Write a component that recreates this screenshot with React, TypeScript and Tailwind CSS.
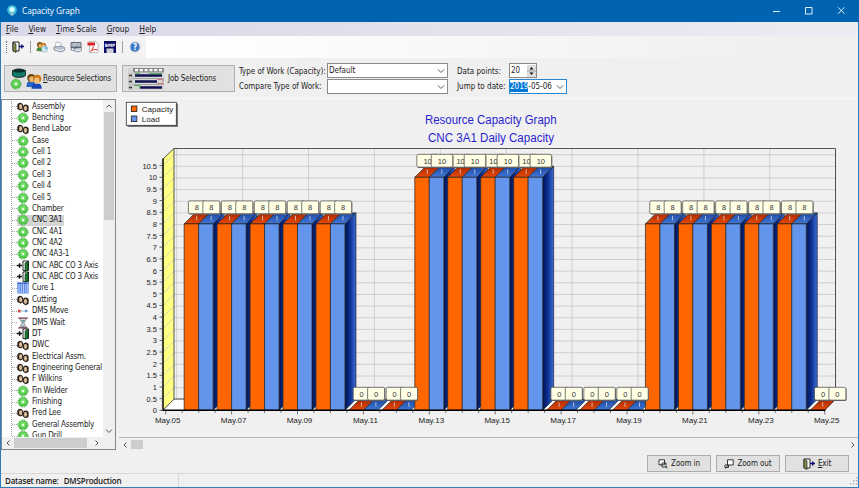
import type { ReactNode } from "react";

type IconProps = { className?: string };

const treeItems: { label: string; icon: string }[] = [
  { label: "Assembly", icon: "people" },
  { label: "Benching", icon: "gear" },
  { label: "Bend Labor", icon: "people" },
  { label: "Case", icon: "gear" },
  { label: "Cell 1", icon: "gear" },
  { label: "Cell 2", icon: "gear" },
  { label: "Cell 3", icon: "gear" },
  { label: "Cell 4", icon: "gear" },
  { label: "Cell 5", icon: "gear" },
  { label: "Chamber", icon: "gear" },
  { label: "CNC 3A1", icon: "gear" },
  { label: "CNC 4A1", icon: "gear" },
  { label: "CNC 4A2", icon: "gear" },
  { label: "CNC 4A3-1", icon: "gear" },
  { label: "CNC ABC CO 3 Axis", icon: "door" },
  { label: "CNC ABC CO 3 Axis", icon: "door" },
  { label: "Cure 1", icon: "grid" },
  { label: "Cutting", icon: "people" },
  { label: "DMS Move", icon: "move" },
  { label: "DMS Wait", icon: "wait" },
  { label: "DT", icon: "door" },
  { label: "DWC", icon: "people" },
  { label: "Electrical Assm.", icon: "people" },
  { label: "Engineering General", icon: "people" },
  { label: "F Wilkins", icon: "people" },
  { label: "Fin Welder", icon: "gear" },
  { label: "Finishing", icon: "gear" },
  { label: "Fred Lee", icon: "people" },
  { label: "General Assembly", icon: "gear" },
  { label: "Gun Drill", icon: "gear" },
];

const values = [8, 8, 8, 8, 8, 0, 0, 10, 10, 10, 10, 0, 0, 0, 8, 8, 8, 8, 8, 0];

function TreeIcon({ name }: { name: string }) {
  return (
    <svg viewBox="0 0 12 12" className="size-3 shrink-0">
      {name === "gear" && (
        <>
          <circle cx="6" cy="6" r="4.600" fill="#4cc444" />
          <circle cx="6" cy="6" r="5" fill="none" stroke="#3fae3a" strokeWidth="1" strokeDasharray="1.800 0.800" />
          <circle cx="6" cy="5.400" r="3" fill="#78dc6c" />
          <circle cx="6" cy="6" r="1.200" fill="#e9ffe6" />
        </>
      )}
      {name === "people" && (
        <>
          <path d="M.3 8V4.200C.3 .8 5.800.8 6 4.200L5.800 8.500 3.500 9.500Z" fill="#2a2018" />
          <ellipse cx="3.600" cy="5.600" rx="1.600" ry="2.600" fill="#d8bd98" />
          <path d="M6 9.500V5.500C6.300 2.600 11.700 2.600 11.700 6L11.500 10 8.500 11.300Z" fill="#2a2018" />
          <ellipse cx="8.500" cy="7.300" rx="1.600" ry="2.600" fill="#d8bd98" />
        </>
      )}
      {name === "door" && (
        <>
          <path d="M6 1h5.500v9.500H6z" fill="#fff" stroke="#111" strokeWidth="0.900" />
          <path d="M8 3 11 1.300V10L8 11.700Z" fill="#1f7a35" stroke="#0a3014" strokeWidth="0.600" />
          <path d="M0 5.500h5M2.600 3.300v4.400" stroke="#111" strokeWidth="1.500" />
        </>
      )}
      {name === "grid" && (
        <>
          <path d="M.3.500h11.400v11H.3z" fill="#5d8ae6" />
          <path d="M2 1v10M4.300 1v10M6.500 1v10M8.700 1v10M10.700 1v10" stroke="#dce8ff" strokeWidth="0.700" />
          <path d="M.3 1.200h11.400" stroke="#2a56b8" />
        </>
      )}
      {name === "move" && (
        <>
          <path d="M1 4.800h2.600v2.600H1z" fill="#d0402e" />
          <path d="M4 6h7" stroke="#7ab" strokeWidth="0.800" />
          <path d="M8 4.200 11 6 8 7.800Z" fill="#5b8fd0" />
        </>
      )}
      {name === "wait" && (
        <>
          <path d="M2.500 1.500h7L6.600 6l2.900 4.500h-7L5.400 6Z" fill="#d9e4ea" stroke="#555" strokeWidth="0.700" />
          <path d="M1 1h10M1 11h10" stroke="#8a3340" strokeWidth="1.200" />
          <path d="M4 3h4L6 5.500ZM4 10l2-2 2 2Z" fill="#6a97a5" />
        </>
      )}
    </svg>
  );
}

function ExitIcon({ className }: IconProps) {
  return (
    <svg viewBox="0 0 12 12" className={className}>
      <path d="M1 1h6v9H1z" fill="#fff" stroke="#222" />
      <path d="M1 1l3 2v8.500L1 10Z" fill="#8b8b50" stroke="#222" strokeWidth="0.700" />
      <path d="M7 5.500h5M9.700 3.500v4" stroke="#0c0c70" strokeWidth="1.400" />
    </svg>
  );
}

function UsersIcon({ className }: IconProps) {
  return (
    <svg viewBox="0 0 16 16" className={className}>
      <path d="M.5 14C.5 9 2 8 5 8s4.500 1 4.500 6Z" fill="#2a66c8" />
      <circle cx="5.300" cy="5" r="4" fill="#6b4a10" />
      <ellipse cx="5.800" cy="6.300" rx="2.600" ry="3" fill="#efb26d" />
      <path d="M5.500 15.800C5.500 11.500 8 10.500 11 10.500s4.700 1 4.700 5.300Z" fill="#1648b8" />
      <circle cx="11.200" cy="5.800" r="4.100" fill="#c87a14" />
      <ellipse cx="10.800" cy="7.600" rx="2.600" ry="3.100" fill="#f7c07a" />
    </svg>
  );
}

function GroupChartIcon() {
  return (
    <svg viewBox="0 0 12 12" className="size-3">
      <path d="M.5 10C.5 7 2 6 4 6s3 1 3 4.500Z" fill="#3c8a3a" />
      <circle cx="3.800" cy="3.800" r="2.800" fill="#7a5212" />
      <ellipse cx="4.200" cy="4.700" rx="1.700" ry="2" fill="#efb26d" />
      <circle cx="7.500" cy="4.300" r="2.600" fill="#c07a1a" />
      <ellipse cx="7.300" cy="5.400" rx="1.600" ry="1.900" fill="#f7c07a" />
      <circle cx="8.700" cy="8.200" r="3.100" fill="#d3e8f2" stroke="#9ab4c0" strokeWidth="0.600" />
      <path d="M8.700 8.200V5.100a3.100 3.100 0 0 1 3.100 3.100Z" fill="#7cc0e0" />
    </svg>
  );
}

function PrinterIcon({ preview }: { preview?: boolean }) {
  return (
    <svg viewBox="0 0 12 12" className="size-3">
      <path d="M3 1l5 1v5L2.500 6Z" fill="#fff" stroke="#8d96a5" strokeWidth="0.600" />
      <path d="M1 6l7-1 3.500 1.500v3L8 11 1 9Z" fill="#b8bfd0" stroke="#687086" strokeWidth="0.600" />
      <path d="M2 8.200 8 9.500l3-1.300" stroke="#fff" strokeWidth="0.900" fill="none" />
      {preview && (
        <path d="M1 1.500h10v5H1zM4 9l3-4" fill="#8fa0b0" fillOpacity="0.600" stroke="#4a5664" strokeWidth="0.800" />
      )}
    </svg>
  );
}

function Chevron({ className, d }: { className?: string; d: string }) {
  return (
    <svg viewBox="0 0 8 8" className={className} fill="none" stroke="#555" strokeWidth="1">
      <path d={d} />
    </svg>
  );
}

const LEFT = "M5.500 1.500 3 4l2.500 2.500";
const RIGHT = "M2.500 1.500 5 4 2.500 6.500";
const UP = "M1.500 5.500 4 3l2.500 2.500";
const DOWN = "M1 2.500l3 3 3-3";

function TitleBar() {
  return (
    <header className="flex h-[22px] shrink-0 items-center bg-[#0063b1] text-white">
      <svg viewBox="0 0 12 12" className="ml-[6px] size-3">
        <circle cx="6" cy="5" r="4.800" fill="#3fc0d8" />
        <circle cx="6" cy="4.500" r="2.600" fill="#d8ffff" />
        <path d="M4.500 8h3v2.500h-3z" fill="#a9cbd0" />
      </svg>
      <span className="ml-[4px] font-['Open_Sans',sans-serif] text-[8.3px] tracking-[-0.1px]">Capacity Graph</span>
      <svg viewBox="0 0 80 12" className="mr-[10px] ml-auto h-3 w-20" fill="none" stroke="#fff" strokeWidth="0.900">
        <path d="M4 6.500h7M36.500 2.500h6.500v6.500h-6.500zM69 2.300l6.500 6.500M75.500 2.300 69 8.800" />
      </svg>
    </header>
  );
}

function MenuBar() {
  const items = ["File", "View", "Time Scale", "Group", "Help"];
  return (
    <nav className="flex h-[14px] shrink-0 items-center gap-[10px] bg-linear-to-r from-[#d8d8e8] to-[#ececf2] pl-[5px] text-[8.4px] tracking-[-0.05px]">
      {items.map((item) => (
        <span key={item}>
          <u>{item[0]}</u>
          {item.slice(1)}
        </span>
      ))}
    </nav>
  );
}

function Toolbar() {
  return (
    <div className="flex h-[22px] shrink-0 items-center bg-linear-to-r from-white from-20% to-[#f0f0f0] to-90%">
      <div className="flex h-full w-[145px] items-center bg-[#f3f3f3] pl-[5px]">
        <div className="mr-[5px] h-3 border-l border-dotted border-gray-500" />
        <ExitIcon className="size-3" />
        <div className="ml-[6px] h-3 border-l border-gray-400" />
        <div className="ml-[5px] flex items-center gap-[5px]">
          <GroupChartIcon />
          <PrinterIcon />
          <PrinterIcon preview />
          <svg viewBox="0 0 12 12" className="size-3">
            <path d="M2.500.5h6l2.500 2.500v8.500h-8.500z" fill="#fff" stroke="#999" strokeWidth="0.600" />
            <path d="M.5 1.500h7.500v3H.5z" fill="#d22" />
            <path d="M3.500 10.500C6 8 6.500 6 6 5.300M3.500 10.500C5 8.500 8 8 10.500 9" fill="none" stroke="#d22" />
          </svg>
          <svg viewBox="0 0 12 12" className="size-3">
            <path d="M0 0h12v12H0z" fill="#0a0a66" />
            <path d="M2.500 7.500h7V12h-7z" fill="#d0d0d8" />
            <text x="6" y="6" textAnchor="middle" fontSize="4.600" fontWeight="bold" fill="#fff">
              BMP
            </text>
          </svg>
        </div>
        <div className="ml-[6px] h-3 border-l border-gray-400" />
        <svg viewBox="0 0 12 12" className="ml-[6px] size-3">
          <circle cx="6" cy="6" r="5" fill="#3c78c8" stroke="#b8c8dc" />
          <text x="6" y="8.800" textAnchor="middle" fontSize="8" fontWeight="bold" fill="#fff">
            ?
          </text>
        </svg>
      </div>
    </div>
  );
}

function ComboBox({ value }: { value: string }) {
  return (
    <div className="flex h-[15px] w-[121px] items-center justify-between border border-[#8a8a8a] bg-white pr-[2px] pl-[1px]">
      <span>{value}</span>
      <Chevron className="size-2" d={DOWN} />
    </div>
  );
}

function OptionsBar() {
  return (
    <section className="flex h-[40px] shrink-0 pl-[3px]">
      <button className="mt-[7px] flex h-[27px] w-[113px] items-center border border-[#b0b0b0] bg-[#e1e1e1] pl-[5px]">
        <div className="flex w-[16px] flex-col items-start">
          <svg viewBox="0 0 14 10" className="ml-[2px] h-[10px] w-[14px]">
            <path d="M.5 2.500v5c2 2.500 11 2.500 13 0v-5Z" fill="#127a6a" stroke="#111" strokeWidth="0.800" />
            <ellipse cx="7" cy="2.600" rx="6.400" ry="2" fill="#0c2f2a" />
          </svg>
          <TreeIcon name="gear" />
        </div>
        <UsersIcon className="mt-[4px] size-4" />
        <span className="ml-px pt-px tracking-[-0.22px]">
          <u>R</u>esource Selections
        </span>
      </button>
      <button className="mt-[7px] ml-[5px] flex h-[27px] w-[113px] items-center border border-[#b0b0b0] bg-[#e1e1e1] pl-[5px]">
        <svg viewBox="0 0 36 24" className="h-6 w-9">
          <path d="M0 1h36v22H0z" fill="#d5d5d5" />
          <path d="M5 1h31v4.500H5z" fill="#8a8a8a" />
          <path d="M7 3.200h27" stroke="#fff" strokeWidth="2.200" strokeDasharray="3 1.800" />
          <path d="M0 6h5v17H0z" fill="#c8c8c8" />
          <path d="M1 8.500h3M1 14.500h3M1 20.500h3" stroke="#333" strokeWidth="1.500" />
          <path d="M5 11.500h31M5 17.500h31" stroke="#888" strokeWidth="0.600" />
          <path d="M7 8.500h27M7 14.500h22M12 20.500h22" stroke="#101050" strokeWidth="2.300" />
          <path d="M7 6.700h5M21 6.700h13M6 18.700h6v3" fill="none" stroke="#2c9a42" strokeWidth="0.900" />
          <path d="M29 12.500h6v4h-6" stroke="#c66" strokeWidth="0.800" fill="none" />
        </svg>
        <span className="ml-[4px] pt-px tracking-[-0.15px]">
          <u>J</u>ob Selections
        </span>
      </button>
      <div className="mt-[6px] ml-[4px] grid h-[31px] w-[88px] grid-rows-2 items-center tracking-[-0.05px]">
        <span>Type of Work (Capacity):</span>
        <span>Compare Type of Work:</span>
      </div>
      <div className="mt-[5px] flex flex-col gap-px">
        <ComboBox value="Default" />
        <ComboBox value="" />
      </div>
      <div className="mt-[6px] ml-[9px] grid h-[31px] w-[52px] grid-rows-2 items-center">
        <span>Data points:</span>
        <span>Jump to date:</span>
      </div>
      <div className="mt-[5px] flex flex-col gap-px">
        <div className="flex h-[15px] w-[28px] items-center justify-between border border-[#8a8a8a] bg-white pl-[1px]">
          <span>20</span>
          <svg viewBox="0 0 9 12" className="h-3 w-[9px]">
            <path d="M0 0h9v12H0z" fill="#ddd" />
            <path d="M0 6h9" stroke="#888" strokeWidth="0.700" />
            <path d="M2.500 4.500h4L4.500 2ZM2.500 7.500h4L4.500 10Z" fill="#111" />
          </svg>
        </div>
        <div className="flex h-[15px] w-[58px] items-center border border-[#2a86cf] bg-white">
          <span className="bg-[#0078d7] py-px text-white">2019</span>
          <span>-05-06</span>
          <Chevron className="mr-[2px] ml-auto size-2" d={DOWN} />
        </div>
      </div>
    </section>
  );
}

function ResourceTree() {
  return (
    <aside className="flex h-[351px] w-[115px] shrink-0 flex-col border border-[#828790] bg-white">
      <div className="flex min-h-0 flex-1">
        <div className="min-w-0 flex-1 overflow-hidden pt-px pl-[9px]">
          <ul className="border-l border-dotted border-gray-400 tracking-[-0.2px]">
            {treeItems.map((item, i) => (
              <li key={i} className="flex h-[11.36px] items-center whitespace-nowrap">
                <span className="w-[5px] shrink-0 border-t border-dotted border-gray-400" />
                <span className={item.label === "CNC 3A1" ? "flex h-full items-center bg-[#d5d5d5] pr-[2px]" : "flex items-center"}>
                  <TreeIcon name={item.icon} />
                  <span className="ml-[3px]">{item.label}</span>
                </span>
              </li>
            ))}
          </ul>
        </div>
        <div className="flex w-[12px] shrink-0 flex-col items-center bg-[#f0f0f0]">
          <Chevron className="my-[2px] size-2" d={UP} />
          <div className="h-[108px] w-[10px] bg-[#cdcdcd]" />
          <Chevron className="mt-auto mb-[2px] size-2" d={DOWN} />
        </div>
      </div>
      <div className="flex h-[12px] shrink-0 items-center bg-[#f0f0f0] pl-[2px]">
        <Chevron className="size-2" d={LEFT} />
        <div className="ml-[2px] h-[10px] w-[73px] bg-[#cdcdcd]" />
        <Chevron className="ml-[6px] size-2" d={RIGHT} />
      </div>
    </aside>
  );
}

// chart geometry, in page pixels
const BASE = 410.3;
const UNIT = 23.3;
const DAY = 32.95;
const ORIGIN = 165.7;
const DEPTH = 11;
const HALF = 14.5;

function Bar({ cx, value, last }: { cx: number; value: number; last: boolean }) {
  const top = BASE - value * UNIT;
  const left = cx - HALF;
  const right = cx + HALF;
  return (
    <g stroke="#222" strokeWidth="0.700">
      {value > 0 && (
        <path d={`M${right} ${top}l${DEPTH} ${-DEPTH}V${BASE - DEPTH}L${right} ${BASE}Z`} fill="url(#side)" />
      )}
      <path d={`M${left} ${top}l${DEPTH} ${-DEPTH}h${HALF}L${cx} ${top}Z`} fill="url(#orangeTop)" />
      {!last && <path d={`M${cx} ${top}l${DEPTH} ${-DEPTH}h${HALF}L${right} ${top}Z`} fill="url(#blueTop)" />}
      {value > 0 && (
        <>
          <path d={`M${left} ${top}H${cx}V${BASE}H${left}Z`} fill="#ff6600" />
          <path d={`M${cx} ${top}H${right}V${BASE}H${cx}Z`} fill="#6495ed" />
        </>
      )}
      <path d={`M${cx - 2} ${top - 8}v4.500M${cx + 12.500} ${top - 8}v4.500`} stroke="#e8e8e8" />
    </g>
  );
}

function Mark({ x, value }: { x: number; value: number }) {
  const top = BASE - value * UNIT;
  const w = value === 10 ? 21.5 : 17;
  return (
    <g>
      <rect x={x - w / 2 + 0.7} y={top - 22.3} width={w} height="13" rx="1.500" fill="#777" />
      <rect x={x - w / 2} y={top - 23} width={w} height="12.800" rx="1.500" fill="#ffffe6" stroke="#444" strokeWidth="0.700" />
      <text x={x} y={top - 13.7} textAnchor="middle" fontSize="7.500" fill="#333">
        {value}
      </text>
    </g>
  );
}

function CapacityChart() {
  const groups = values.map((value, i) => ({ value, cx: ORIGIN + DAY * (i + 1) }));
  const steps = Array.from({ length: 22 }, (_, i) => i / 2);
  const dates = Array.from({ length: 11 }, (_, i) => i);

  return (
    <svg viewBox="119 99 738 338" className="h-[338px] w-[738px] shrink-0 font-['Liberation_Sans',sans-serif]">
      <defs>
        <linearGradient id="side">
          <stop offset="0" stopColor="#001458" />
          <stop offset="0.400" stopColor="#0a2a86" />
          <stop offset="1" stopColor="#3a6cdc" />
        </linearGradient>
        <linearGradient id="orangeTop" x1="0" y1="1" x2="0" y2="0">
          <stop offset="0" stopColor="#e84a08" />
          <stop offset="1" stopColor="#a82800" />
        </linearGradient>
        <linearGradient id="blueTop" x1="0" y1="1" x2="0" y2="0">
          <stop offset="0" stopColor="#4078d8" />
          <stop offset="1" stopColor="#1c48a0" />
        </linearGradient>
      </defs>

      <g fontSize="12" fill="#2a1fd0">
        <text x="425" y="123.500" textLength="131.500" lengthAdjust="spacingAndGlyphs">Resource Capacity Graph</text>
        <text x="428" y="142" textLength="126" lengthAdjust="spacingAndGlyphs">CNC 3A1 Daily Capacity</text>
      </g>

      <rect x="127.500" y="103.500" width="50.500" height="23.500" fill="#777" />
      <rect x="126.300" y="102.300" width="50" height="23" fill="#fff" stroke="#333" strokeWidth="0.800" />
      <rect x="131.300" y="106" width="5.600" height="5.600" fill="#ff6600" stroke="#222" strokeWidth="0.800" />
      <rect x="131.300" y="116" width="5.600" height="5.600" fill="#6495ed" stroke="#222" strokeWidth="0.800" />
      <g fontSize="8" fill="#222">
        <text x="141.700" y="111.700" textLength="31.500">Capacity</text>
        <text x="141.700" y="121.800" textLength="18">Load</text>
      </g>

      <path d="M163 159 174 148.500V399L163 410.300Z" fill="#ffff80" />
      <path d="M163 410.300 174 399H835.500L825 410.300Z" fill="#fff" />
      <g stroke="#c6c6c6" strokeWidth="0.800">
        {steps.map((s) => (
          <path key={s} fill="none" d={`M163 ${BASE - s * UNIT}l11 -11H835.500`} />
        ))}
        {dates.map((d) => (
          <path key={d} d={`M${ORIGIN + DEPTH + d * DAY * 2} 148.500V399`} />
        ))}
      </g>
      <path d="M163 159 174 148.500H835.500V399H174V148.500M174 399 163 410.300" fill="none" stroke="#444" strokeWidth="0.900" />

      {groups.map((g, i) => (
        <Bar key={i} cx={g.cx} value={g.value} last={i === groups.length - 1} />
      ))}

      <path d="M163 158.500V410.300H825.500" fill="none" stroke="#000" strokeWidth="1.500" />
      {Array.from({ length: 54 }, (_, i) => (
        <path key={i} d={`M161 ${BASE - (i * UNIT) / 5}h2`} stroke="#777" strokeWidth="0.600" />
      ))}
      {Array.from({ length: 41 }, (_, i) => (
        <path key={i} d={`M${ORIGIN + (i * DAY) / 2} 411v${i % 4 === 0 ? 3.5 : 2}`} stroke="#444" strokeWidth="0.700" />
      ))}
      <g fontSize="7.500" fill="#222">
        {steps.map((s) => (
          <g key={s}>
            <path d={`M159.500 ${BASE - s * UNIT}h3`} stroke="#444" strokeWidth="0.800" />
            <text x="157" y={BASE - s * UNIT + 3} textAnchor="end">
              {s}
            </text>
          </g>
        ))}
        {dates.map((d) => (
          <text key={d} x={ORIGIN + d * DAY * 2 + 2} y="423.400" textAnchor="middle" fontSize="8">
            {`May.${String(5 + d * 2).padStart(2, "0")}`}
          </text>
        ))}
      </g>

      {groups.map((g, i) => (
        <Mark key={i} x={g.cx - 1.7} value={g.value} />
      ))}
      {groups.map((g, i) => (
        <Mark key={i} x={g.cx + 12.7} value={g.value} />
      ))}
    </svg>
  );
}

function ActionButton({ children }: { children: ReactNode }) {
  return (
    <button className="flex h-[17px] w-[64px] items-center justify-center gap-[3px] border border-[#adadad] bg-[#e1e1e1] tracking-[-0.1px]">
      {children}
    </button>
  );
}

export default function App() {
  return (
    <div className="flex h-[488px] w-[859px] flex-col overflow-hidden bg-[#f0f0f0] font-['DejaVu_Sans_Condensed','DejaVu_Sans',sans-serif] text-[8px] leading-none whitespace-nowrap text-[#1c1c1c]">
      <TitleBar />
      <div className="flex min-h-0 flex-1 flex-col border-x border-b border-[#2f7ab8]">
        <MenuBar />
        <Toolbar />
        <OptionsBar />
        <div className="flex h-[353px] shrink-0 border-t border-[#f8f8f8]">
          <ResourceTree />
          <div className="ml-[3px] flex flex-1 flex-col">
            <CapacityChart />
            <div className="flex h-[14px] items-center border-t border-[#b8b8b8]">
              <Chevron className="ml-[2px] size-2" d={LEFT} />
              <div className="ml-[2px] h-[9px] w-[12px] bg-[#cdcdcd]" />
              <Chevron className="mr-px ml-auto size-2" d={RIGHT} />
            </div>
          </div>
        </div>
        <div className="flex flex-1 justify-end gap-[5px] pt-[4px] pr-[9px]">
          <ActionButton>
            <svg viewBox="0 0 10 10" className="size-[10px]" fill="#fff" stroke="#222" strokeWidth="0.900">
              <path d="M1 .8h5.500v5H1zM4 4h4v4H4zM7.500 7.500l2 1.500" />
            </svg>
            <span className="pt-px">Zoom in</span>
          </ActionButton>
          <ActionButton>
            <svg viewBox="0 0 10 10" className="size-[10px]" fill="#fff" stroke="#222" strokeWidth="0.900">
              <path d="M3.500.8H9.200v5.200H3.500zM1 6h3.500v2.500H1zM4 6 1.500 9.500" />
            </svg>
            <span className="pt-px">Zoom out</span>
          </ActionButton>
          <ActionButton>
            <ExitIcon className="size-3" />
            <span className="pt-px">
              <u>E</u>xit
            </span>
          </ActionButton>
        </div>
        <footer className="flex h-[14px] shrink-0 items-center border-t border-[#d8d8d8] pl-[4px]">
          <div className="flex h-full w-[174px] items-center gap-[5px] border-r border-[#d8d8d8] font-['Open_Sans',sans-serif] text-[8px] font-semibold tracking-[-0.2px]">
            <span>Dataset name:</span>
            <span>DMSProduction</span>
          </div>
          <svg viewBox="0 0 8 8" className="ml-auto size-2" fill="#b5b5b5">
            <path d="M6 0h1.500v1.500H6zM6 3h1.500v1.500H6zM6 6h1.500v1.500H6zM3 3h1.500v1.500H3zM3 6h1.500v1.500H3zM0 6h1.500v1.500H0z" />
          </svg>
        </footer>
      </div>
    </div>
  );
}
